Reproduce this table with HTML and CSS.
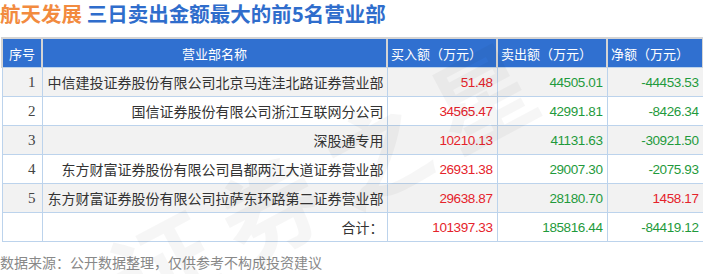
FILE: index.html
```html
<!DOCTYPE html>
<html lang="zh-CN">
<head>
  <meta charset="UTF-8" />
  <title>航天发展 三日卖出金额最大的前5名营业部</title>
  <link rel="stylesheet" href="styles.css">
</head>
<body>

  <div class="title"><span class="stock">航天发展</span> 三日卖出金额最大的前5名营业部</div>

  <table class="rank">
    <colgroup>
      <col class="c-no" />
      <col class="c-name" />
      <col class="c-buy" />
      <col class="c-sell" />
      <col class="c-net" />
    </colgroup>
    <thead>
      <tr>
        <th>序号</th>
        <th>营业部名称</th>
        <th class="left">买入额（万元）</th>
        <th class="left">卖出额（万元）</th>
        <th class="left">净额（万元）</th>
      </tr>
    </thead>
    <tbody>
      <tr class="odd">
        <td class="no">1</td>
        <td class="name">中信建投证券股份有限公司北京马连洼北路证券营业部</td>
        <td class="num red">51.48</td>
        <td class="num green">44505.01</td>
        <td class="num green">-44453.53</td>
      </tr>
      <tr>
        <td class="no">2</td>
        <td class="name">国信证券股份有限公司浙江互联网分公司</td>
        <td class="num red">34565.47</td>
        <td class="num green">42991.81</td>
        <td class="num green">-8426.34</td>
      </tr>
      <tr class="odd">
        <td class="no">3</td>
        <td class="name">深股通专用</td>
        <td class="num red">10210.13</td>
        <td class="num green">41131.63</td>
        <td class="num green">-30921.50</td>
      </tr>
      <tr>
        <td class="no">4</td>
        <td class="name">东方财富证券股份有限公司昌都两江大道证券营业部</td>
        <td class="num red">26931.38</td>
        <td class="num green">29007.30</td>
        <td class="num green">-2075.93</td>
      </tr>
      <tr class="odd">
        <td class="no">5</td>
        <td class="name">东方财富证券股份有限公司拉萨东环路第二证券营业部</td>
        <td class="num red">29638.87</td>
        <td class="num green">28180.70</td>
        <td class="num red">1458.17</td>
      </tr>
      <tr>
        <td class="no"></td>
        <td class="name">合计：</td>
        <td class="num red">101397.33</td>
        <td class="num green">185816.44</td>
        <td class="num green">-84419.12</td>
      </tr>
    </tbody>
  </table>

  <div class="source">数据来源：公开数据整理，仅供参考不构成投资建议</div>

  <!-- 水印 -->
  <div class="watermark">证券之星</div>

</body>
</html>
```

FILE: styles.css
```css
html {
  overflow: hidden;
}
body {
  margin: 0;
  background: #fff;
  font-family: "Noto Sans CJK SC", "Noto Sans", sans-serif;
  color: #333;
  width: 703px;
  height: 274px;
  overflow: hidden;
  position: relative;
}
.title {
  font-size: 20.5px;
  font-weight: bold;
  line-height: 30px;
  margin-top: -2px;
  color: #2f6dcc;
  height: 39px;
  white-space: nowrap;
}
.stock {
  color: #f28b3f;
}
.rank {
  border-collapse: collapse;
  margin-left: 1px;
  width: 701px;
  table-layout: fixed;
}
.c-no { width: 40px; }
.c-name { width: 345px; }
.c-buy { width: 110px; }
.c-sell { width: 110px; }
.c-net { width: 96px; }
.rank th {
  background: #3070d0;
  color: #fff;
  font-size: 13px;
  font-weight: normal;
  height: 28px;
  padding: 0;
  border: 2px solid #d4d4d4;
  border-bottom: 1px solid #bcd3ec;
  text-align: center;
}
.rank th.left {
  text-align: left;
  padding-left: 3px;
}
.rank td {
  border: 1px solid #bcd3ec;
  height: 28px;
  padding: 0 4px;
  font-size: 14px;
  white-space: nowrap;
  overflow: hidden;
}
.rank tr.odd td {
  background: #f2f2f2;
}
.rank td.no {
  text-align: right;
  padding-right: 6px;
  font-family: "Liberation Serif", serif;
  font-size: 15px;
  color: #444;
}
.rank td.name {
  text-align: right;
  padding-right: 3px;
}
.rank td.num {
  text-align: right;
  font-family: "Liberation Sans", sans-serif;
  font-size: 13.5px;
  letter-spacing: -0.4px;
}
.red { color: #e5232b; }
.green { color: #1f9a3c; }
.source {
  margin-top: 12px;
  font-size: 14px;
  color: #888;
  line-height: 16px;
}
.watermark {
  position: absolute;
  left: 90px;
  top: 100px;
  font-size: 100px;
  font-weight: bold;
  color: rgba(0, 0, 0, 0.035);
  transform: rotate(-28deg);
  white-space: nowrap;
  pointer-events: none;
  letter-spacing: 20px;
}
```
